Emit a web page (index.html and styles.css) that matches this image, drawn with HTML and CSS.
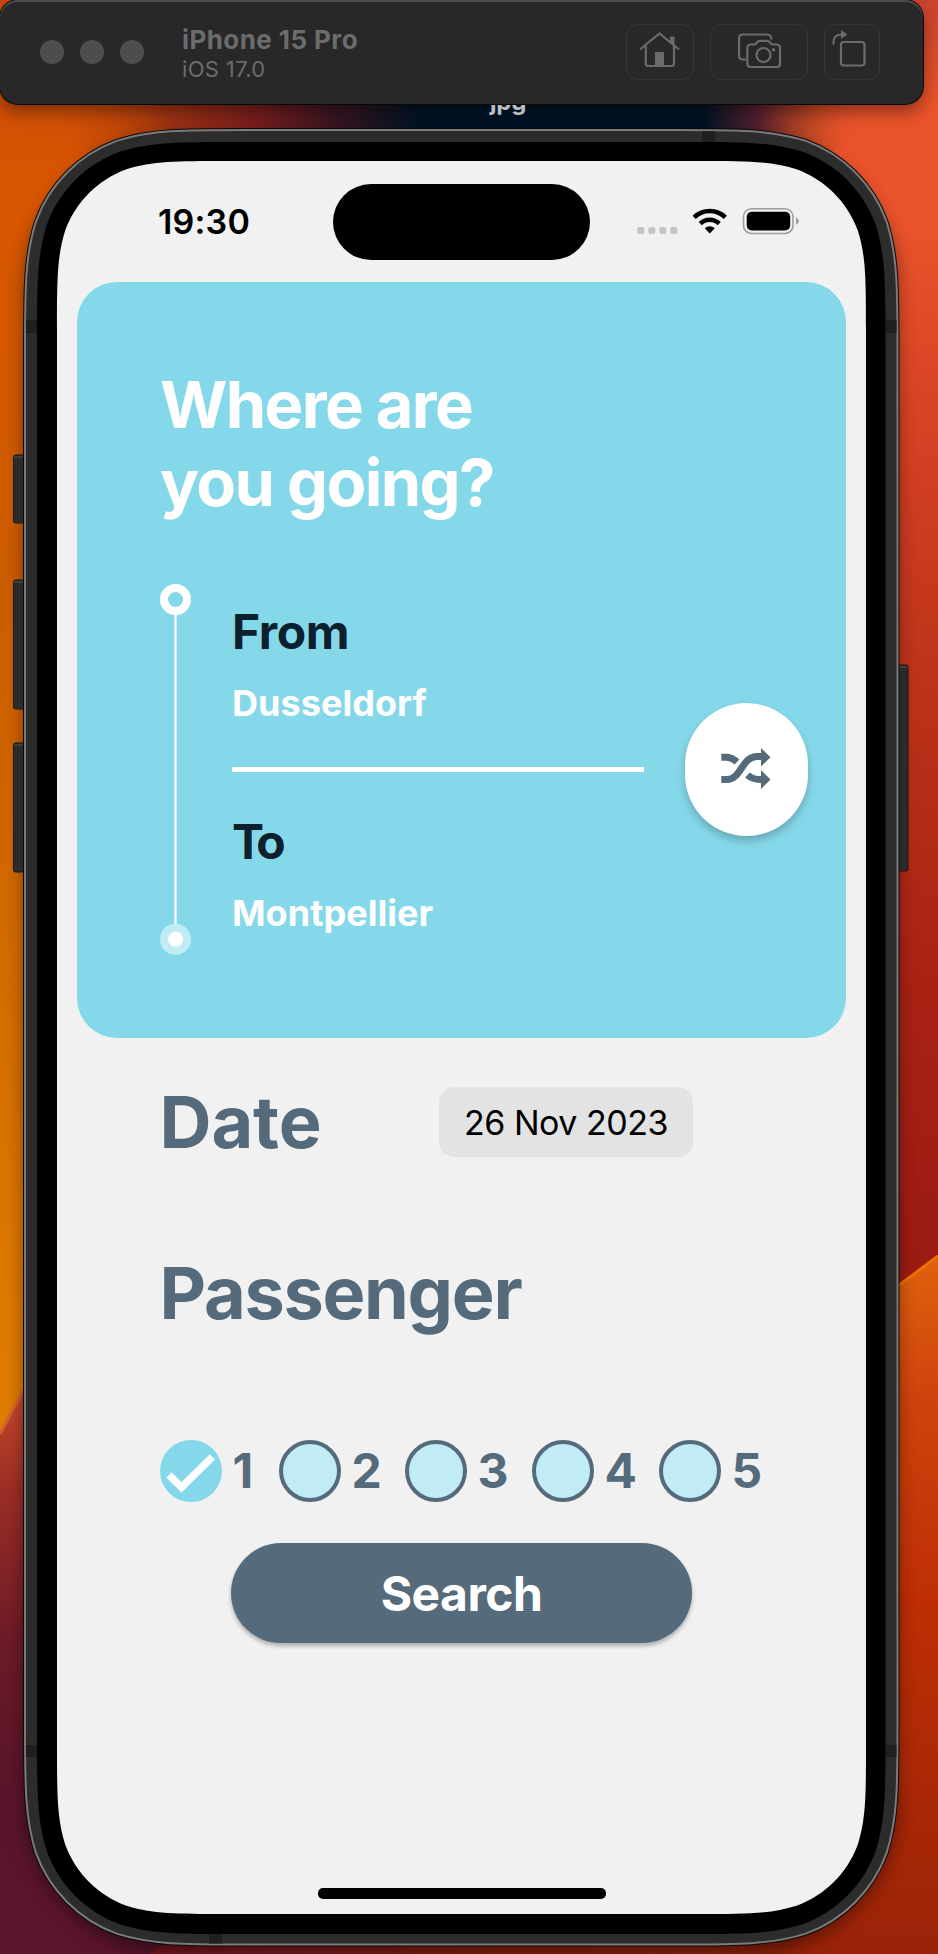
FILE: index.html
```html
<!DOCTYPE html>
<html lang="en">
<head>
<meta charset="utf-8">
<title>Trip search</title>
<link rel="stylesheet" href="styles.css">
</head>
<body>
<div class="desktop">
  <svg class="art" viewBox="0 0 938 1954" width="938" height="1954">
    <defs>
      <linearGradient id="left" x1="0" y1="0" x2="0" y2="1">
        <stop offset="0" stop-color="#c8480f"/><stop offset=".1" stop-color="#d95600"/><stop offset=".3" stop-color="#cb5c00"/><stop offset=".5" stop-color="#d46b00"/><stop offset=".7" stop-color="#df7b00"/>
      </linearGradient>
      <linearGradient id="maroon" x1="0" y1="1390" x2="0" y2="1954" gradientUnits="userSpaceOnUse">
        <stop offset="0" stop-color="#c5482a"/><stop offset=".18" stop-color="#9c2d25"/><stop offset=".45" stop-color="#6c1a27"/><stop offset=".7" stop-color="#5a152a"/><stop offset="1" stop-color="#5c142c"/>
      </linearGradient>
      <linearGradient id="right" x1="0" y1="0" x2="0" y2="1300" gradientUnits="userSpaceOnUse">
        <stop offset="0" stop-color="#c9432f"/><stop offset=".08" stop-color="#ea532b"/><stop offset=".17" stop-color="#ea532b"/><stop offset=".3" stop-color="#d94426"/><stop offset=".52" stop-color="#bd331a"/><stop offset=".75" stop-color="#a92314"/><stop offset="1" stop-color="#991a12"/>
      </linearGradient>
      <linearGradient id="flame" x1="0" y1="1253" x2="0" y2="1954" gradientUnits="userSpaceOnUse">
        <stop offset="0" stop-color="#e0620e"/><stop offset=".2" stop-color="#cf440d"/><stop offset=".5" stop-color="#bd2e05"/><stop offset="1" stop-color="#9a2308"/>
      </linearGradient>
      <linearGradient id="top" x1="0" y1="0" x2="938" y2="0" gradientUnits="userSpaceOnUse">
        <stop offset=".07" stop-color="#b8420a" stop-opacity="0"/><stop offset=".19" stop-color="#9c3114"/><stop offset=".27" stop-color="#7c1f1e"/><stop offset=".36" stop-color="#381522"/><stop offset=".45" stop-color="#001424"/><stop offset=".75" stop-color="#021324"/><stop offset=".81" stop-color="#5a2230"/><stop offset=".87" stop-color="#b8461f" stop-opacity=".7"/><stop offset=".92" stop-color="#ea542d" stop-opacity="0"/>
      </linearGradient>
      <linearGradient id="bottom" x1="150" y1="0" x2="800" y2="0" gradientUnits="userSpaceOnUse">
        <stop offset="0" stop-color="#7c1622"/><stop offset=".2" stop-color="#7a1a20"/><stop offset=".5" stop-color="#8c200e"/><stop offset="1" stop-color="#9a2308"/>
      </linearGradient>
      <filter id="soft" x="-5%" y="-20%" width="110%" height="140%"><feGaussianBlur stdDeviation="9"/></filter>
    </defs>
    <rect width="469" height="1954" fill="url(#left)"/>
    <rect x="469" width="469" height="1954" fill="url(#right)"/>
    <rect y="90" width="938" height="60" fill="url(#top)"/>
    <path d="M0 1433L24 1388L200 1340V1954H0Z" fill="url(#maroon)"/>
    <path d="M0 1434L24 1389" stroke="#d4602e" stroke-width="3"/>
    <path d="M700 1430L938 1255V1954H700Z" fill="url(#flame)"/>
    <path d="M896 1287.500L938 1256" stroke="#ee7006" stroke-width="3"/>
    <path d="M150 1954Q160 1944 180 1940H800V1954Z" fill="url(#bottom)"/>
    <rect x="24" y="136" width="874" height="1818" rx="150" fill="#000" opacity=".42" filter="url(#soft)"/>
    <rect x="0" y="8" width="923" height="104" rx="18" fill="#000" opacity=".4" filter="url(#soft)"/>
    <g fill="#2b2b2b" stroke="#1b1816" stroke-width="1">
      <rect x="13.500" y="455" width="16" height="68" rx="2"/>
      <rect x="13.500" y="580" width="16" height="129" rx="2"/>
      <rect x="13.500" y="743" width="16" height="129" rx="2"/>
      <rect x="892" y="665" width="16" height="206" rx="2"/>
    </g>
    <path d="M14 457h10M14 582h10M14 745h10M898 667h9" stroke="#555"/>
    <path d="M246.700 130H675.800c63.900 0 95.800 0 130.100 10.900c37.500 13.600 67.100 43.200 80.700 80.700c10.900 34.300 10.900 66.200 10.900 130.100V1722.800c0 63.900 0 95.800-10.900 130.100c-13.600 37.500-43.200 67.100-80.700 80.700c-34.300 10.900-66.200 10.900-130.100 10.900H246.700c-63.900 0-95.800 0-130.100-10.900c-37.500-13.600-67.100-43.200-80.700-80.700c-10.900-34.300-10.900-66.200-10.900-130.100V351.700c0-63.900 0-95.800 10.900-130.100c13.600-37.500 43.200-67.100 80.700-80.700c34.300-10.900 66.200-10.900 130.100-10.900Z" fill="none" stroke="#0a0a0a" stroke-width="4"/>
    <path d="M246.700 130H675.800c63.900 0 95.800 0 130.100 10.900c37.500 13.600 67.100 43.200 80.700 80.700c10.900 34.300 10.900 66.200 10.900 130.100V1722.800c0 63.900 0 95.800-10.900 130.100c-13.600 37.500-43.200 67.100-80.700 80.700c-34.300 10.900-66.200 10.900-130.100 10.900H246.700c-63.900 0-95.800 0-130.100-10.900c-37.500-13.600-67.100-43.200-80.700-80.700c-10.900-34.300-10.900-66.200-10.900-130.100V351.700c0-63.900 0-95.800 10.900-130.100c13.600-37.500 43.200-67.100 80.700-80.700c34.300-10.900 66.200-10.900 130.100-10.900Z" fill="#2c2c2c" stroke="#7b7b7b" stroke-width="2"/>
    <path d="M26 320h12v13h-12zM26 1745h12v12h-12zM885 320h11.500v13h-11.500zM885 1745h11.500v12h-11.500zM702 131h13v12h-13zM209 1933h13v10.500h-13z" fill="#1f1f1f"/>
    <path d="M237.300 142H685.200c57.700 0 86.500 0 117.600 9.800c33.900 12.300 60.600 39 72.900 72.900c9.800 31.100 9.800 59.900 9.800 117.600V1733.700c0 57.700 0 86.500-9.800 117.600c-12.300 33.900-39 60.600-72.900 72.900c-31.100 9.800-59.900 9.800-117.600 9.800H237.300c-57.700 0-86.500 0-117.600-9.800c-33.900-12.300-60.600-39-72.900-72.900c-9.800-31.100-9.800-59.900-9.800-117.600V342.300c0-57.700 0-86.500 9.800-117.600c12.300-33.900 39-60.600 72.900-72.900c31.100-9.800 59.900-9.800 117.600-9.800Z"/>
    <path d="M225.200 161H697.800c48.500 0 72.700 0 98.700 8.200c28.500 10.400 50.900 32.800 61.300 61.300c8.200 26 8.200 50.200 8.200 98.700V1745.800c0 48.500 0 72.700-8.200 98.700c-10.400 28.500-32.800 50.900-61.300 61.300c-26 8.200-50.200 8.200-98.700 8.200H225.200c-48.500 0-72.700 0-98.700-8.200c-28.500-10.400-50.900-32.800-61.300-61.300c-8.200-26-8.200-50.200-8.200-98.700V329.200c0-48.500 0-72.700 8.200-98.700c10.400-28.500 32.800-50.900 61.300-61.300c26-8.200 50.200-8.200 98.700-8.200Z" fill="#f1f1f1"/>
  </svg>
  <span class="file-name">jpg</span>

  <header class="toolbar">
    <div class="lights"><i></i><i></i><i></i></div>
    <div class="device"><b>iPhone 15 Pro</b><span>iOS 17.0</span></div>
    <div class="tools">
      <button class="tool home"><svg width="66" height="54" viewBox="627 25 66 54" fill="none" stroke="#6b6b6b" stroke-width="2.200"><path d="M640 49.500L659.500 33.500L679 49.500M645.800 46V63.500Q645.800 66 648 66H671.500Q674 66 674 63.500V46"/><path d="M670 36.500h4.500v9l-4.500-3.500zM655 52h9v14h-9z" fill="#6b6b6b" stroke="none"/></svg></button>
      <button class="tool shot"><svg width="96" height="54" viewBox="711 25 96 54" fill="none" stroke="#6b6b6b" stroke-width="2.200"><path d="M746 59.500H743Q739 59.500 739 55.500V38.500Q739 34.500 743 34.500H767Q771 34.500 771.500 39.500"/><path d="M751 44.500H754.500Q756 44.500 757 42.500Q758 40.800 760 40.800H767Q769 40.800 770 42.500Q771 44.500 773 44.500H776Q780 44.500 780 48V63.500Q780 67 776.500 67H751Q747.300 67 747.300 63.500V48Q747.300 44.500 751 44.500Z"/><circle cx="763.500" cy="55" r="7"/><circle cx="773.500" cy="49.800" r="1.700" fill="#6b6b6b" stroke="none"/></svg></button>
      <button class="tool turn"><svg width="54" height="54" viewBox="825 25 54 54" fill="none" stroke="#6b6b6b" stroke-width="2.200"><rect x="841" y="42" width="23.500" height="23.500" rx="3"/><path d="M833.500 44.500V42Q833.500 34.500 842 34.500"/><path d="M841 30L847.500 34.500L841 39Z" fill="#6b6b6b" stroke="none"/></svg></button>
    </div>
  </header>

  <main class="screen">
    <div class="status">
      <span class="clock">19:30</span>
      <span class="island"></span>
      <svg class="indicators" width="164" height="28" viewBox="636 207 164 28">
        <g fill="#c4c4c4"><rect x="637.300" y="227" width="7" height="7" rx="2"/><rect x="648.300" y="227" width="7" height="7" rx="2"/><rect x="659.300" y="227" width="7" height="7" rx="2"/><rect x="670.300" y="227" width="7" height="7" rx="2"/></g>
        <g fill="none" stroke="#000" stroke-width="4.600"><path d="M694.200 217.300A22.500 22.500 0 0 1 725.300 217.300"/><path d="M700.300 223.600A13.500 13.500 0 0 1 719.200 223.600"/></g>
        <path d="M704.700 228.300A7.500 7.500 0 0 1 714.800 228.300L709.750 233.600Z"/>
        <rect x="743.500" y="208.700" width="49.500" height="24.800" rx="8" fill="none" stroke="#9d9d9d" stroke-width="1.600"/>
        <rect x="746.700" y="211.800" width="43.500" height="18.600" rx="5"/>
        <path d="M796 217.200Q801.800 221 796 224.800Z" fill="#9d9d9d"/>
      </svg>
    </div>

    <section class="card">
      <h1>Where are<br>you going?</h1>
      <div class="route">
        <svg class="track" width="32" height="372" viewBox="160 584 32 372"><path d="M175.500 612V926" stroke="#fff" stroke-width="2.200"/><circle cx="175.500" cy="599.500" r="11.500" fill="none" stroke="#fff" stroke-width="8"/><circle cx="175.500" cy="939.300" r="15.500" fill="#c1ebf5"/><circle cx="175.500" cy="939.300" r="7.500" fill="#fff"/></svg>
        <div class="stops">
          <div class="stop"><h2>From</h2><p>Dusseldorf</p></div>
          <hr>
          <div class="stop"><h2 class="to">To</h2><p>Montpellier</p></div>
        </div>
        <button class="swap"><svg width="50" height="42" viewBox="721 750 50 42" fill="none" stroke="#556a7b" stroke-width="7"><path d="M721.300 759.300H726Q732 759.300 737 764"/><path d="M721.300 781.500H727C741 781.500 742 758.500 757 758.500H762"/><path d="M747.500 777Q753 782 762 781.500"/><path d="M761 750L770.500 759.300L761 768.500ZM761 772L770.500 781.500L761 791Z" fill="#556a7b" stroke="none"/></svg></button>
      </div>
    </section>

    <section class="date"><h3>Date</h3><span class="picker">26 Nov 2023</span></section>
    <h3 class="passenger">Passenger</h3>
    <div class="counts">
      <label><i class="radio on"><svg width="62" height="62" viewBox="160 1440.700 62 62"><path d="M169 1475.500L181.500 1488L212.500 1457.500" fill="none" stroke="#fff" stroke-width="7.500"/></svg></i><span>1</span></label>
      <label><i class="radio"></i><span>2</span></label>
      <label><i class="radio"></i><span>3</span></label>
      <label><i class="radio"></i><span>4</span></label>
      <label><i class="radio"></i><span>5</span></label>
    </div>
    <button class="search">Search</button>
    <div class="home-bar"></div>
  </main>
</div>
</body>
</html>
```
FILE: styles.css
```css
* { box-sizing: border-box; }
body { margin: 0; font-family: Inter, "Liberation Sans", sans-serif; }
h1, h2, h3, p, hr { margin: 0; }
button { border: 0; padding: 0; font: inherit; }
svg { display: block; }
.desktop { position: relative; width: 938px; height: 1954px; overflow: hidden; }
.art { position: absolute; inset: 0; }
.file-name { position: absolute; left: 490px; top: 87px; font-size: 24px; line-height: 30px; font-weight: 700; color: #b9bec3; letter-spacing: -.2px; }

.toolbar { position: relative; width: 922.500px; height: 104px; padding: 0 42.500px 0 40px; display: flex; align-items: center; background: #282828; border-radius: 18px; box-shadow: inset 0 2px 0 #4d4d4d, 0 0 0 1px #080808; }
.lights { display: flex; gap: 16px; width: 142px; }
.lights i { width: 24px; height: 24px; border-radius: 50%; background: #4d4d4d; }
.device { display: flex; flex-direction: column; padding-top: 1px; color: #6c6c6c; }
.device b { font-size: 26px; line-height: 32px; font-weight: 700; letter-spacing: .42px; }
.device span { font-size: 22px; line-height: 26px; letter-spacing: .35px; }
.tools { margin-left: auto; display: flex; gap: 16px; }
.tool { height: 56px; background: none; border: 1.5px solid #373737; border-radius: 12px; display: grid; place-items: center; }
.home { width: 68px; }
.shot { width: 98px; }
.turn { width: 56px; }

.screen { position: relative; margin: 57px 0 0 57px; width: 809px; height: 1753px; display: flex; flex-direction: column; }
.status { height: 121px; display: flex; align-items: flex-start; padding: 23px 0 0 101px; }
.clock { width: 175px; padding-top: 17px; font-size: 34px; line-height: 42px; font-weight: 600; letter-spacing: .2px; }
.island { width: 257px; height: 76px; border-radius: 38px; background: #000; }
.indicators { margin: 23px 0 0 46px; }

.card { margin: 0 20.500px 0 20px; height: 755.500px; padding: 84px 36.500px 0 83px; border-radius: 40px; background: #85d8ea; color: #fff; }
h1 { font-size: 65px; line-height: 78px; font-weight: 700; letter-spacing: -1.650px; }
.route { display: flex; margin-top: 61.500px; }
.track { flex: none; }
.stops { width: 412px; margin-left: 40px; padding-top: 19.500px; }
h2 { font-size: 48px; line-height: 58px; font-weight: 700; color: #0d202d; letter-spacing: -.4px; }
h2.to { letter-spacing: -4px; }
.stop p { margin-top: 20px; font-size: 36px; line-height: 44px; font-weight: 700; letter-spacing: .05px; }
hr { border: 0; height: 5px; background: #fff; margin: 41.500px 0 41.500px; }
.swap { flex: none; width: 123.500px; height: 132.500px; margin: 119.500px 0 0 40.500px; border-radius: 61.750px; background: #fff; display: grid; place-items: center; box-shadow: 0 5px 9px rgba(0,0,0,.22); }
.swap svg { margin-left: -1px; }

h3 { font-size: 72px; line-height: 88px; font-weight: 700; color: #556a7b; letter-spacing: -1.300px; }
.date { display: flex; align-items: flex-start; margin: 40.500px 0 0 102.500px; height: 88px; }
.date h3 { width: 279.500px; letter-spacing: -.1px; }
.picker { margin-top: 9px; width: 254px; height: 70px; border-radius: 15px; background: #e3e3e3; display: grid; place-items: center; font-size: 34px; color: #000; letter-spacing: -.5px; white-space: nowrap; }
.passenger { margin: 83px 0 0 102.500px; }
.counts { display: flex; margin: 103px 0 0 103px; height: 62px; }
.counts label { display: flex; align-items: center; width: 127px; }
.counts label:first-child { width: 119px; }
.counts label:nth-child(2) { width: 126px; }
.radio { flex: none; width: 62px; height: 62px; border-radius: 50%; border: 4px solid #556a7b; background: #c1ebf5; }
.radio.on { border: 0; background: #85d8ea; }
.counts span { margin-left: 10.500px; font-size: 48px; line-height: 58px; font-weight: 700; color: #556a7b; }
.search { margin: 41px 0 0 174px; width: 461px; height: 100px; border-radius: 50px; background: #556a7b; color: #fff; font-size: 48px; font-weight: 700; letter-spacing: -.55px; box-shadow: 0 3px 4px rgba(0,0,0,.28); }
.home-bar { width: 288px; height: 10.500px; border-radius: 5px; background: #000; margin: auto auto 15.500px 261px; }
```
